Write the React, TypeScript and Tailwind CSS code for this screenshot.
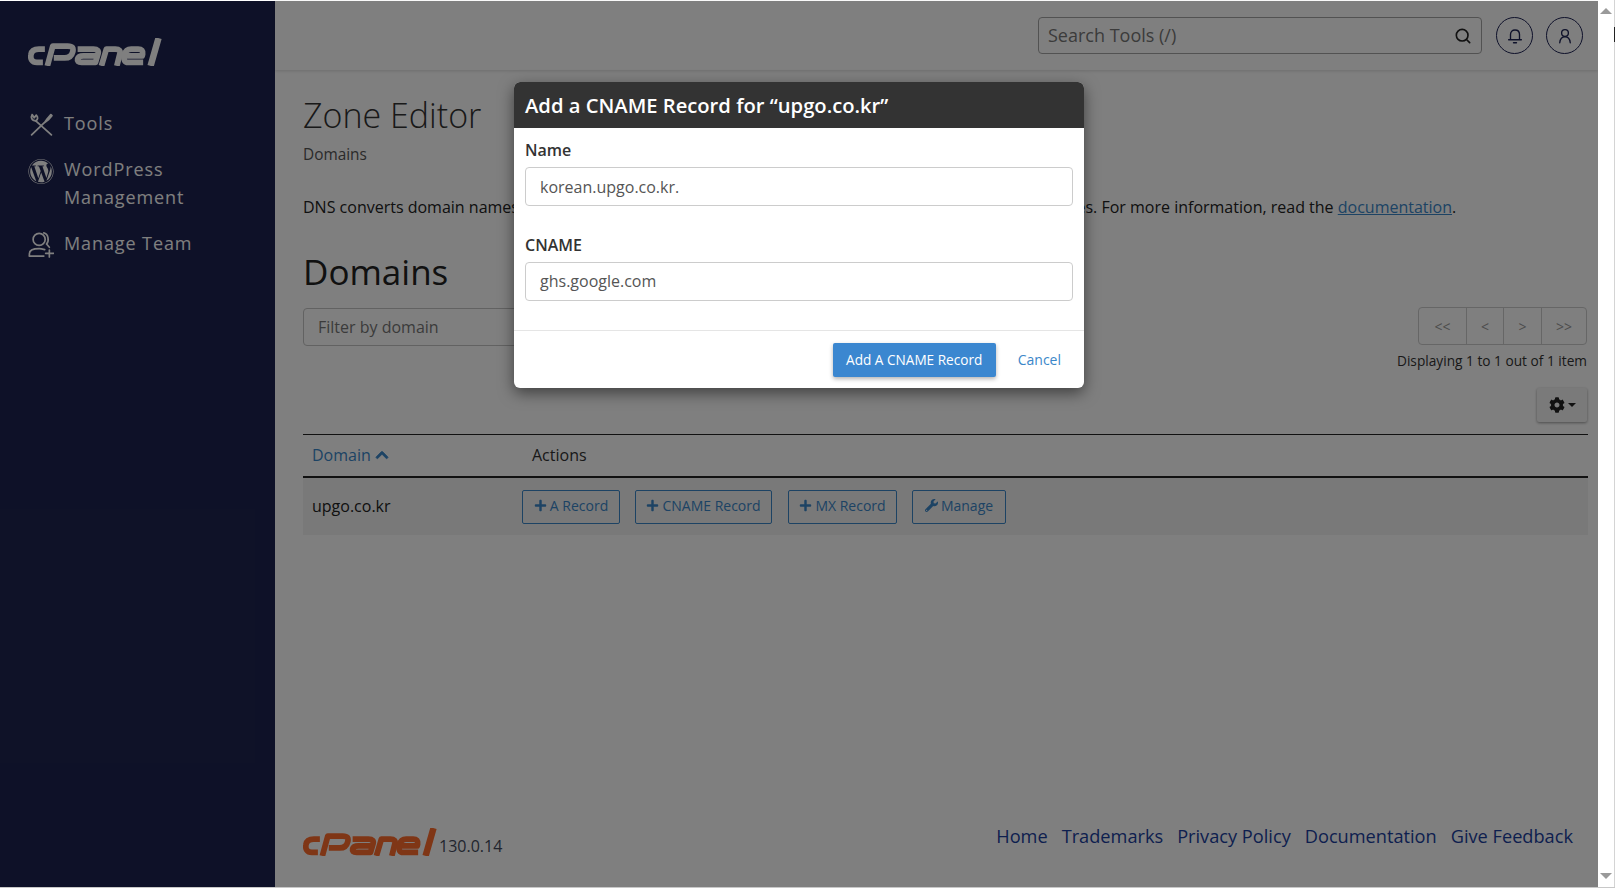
import { FaWordpress, FaWrench, FaPlus, FaChevronUp, FaCog } from 'react-icons/fa'

function CpanelLogo({ className }: { className: string }) {
  return (
    <svg viewBox="0 0 135 28" className={className} fill="none" stroke="currentColor" strokeWidth="5.8" strokeLinejoin="round">
      <path d="M17 11 H11 C6 11 3.5 13 3 16.5 C2.2 21 4 24.5 9 24.5 H15" />
      <path d="M19.5 28 L25 8 H40 C45 8 46 10 45 14 C44 18 42 20 37 20 H26" />
      <path d="M50 11 H66 C70 11 71.5 13 70.5 16 L68 24.5 H54 C50.5 24.5 49.5 23 50 21 C50.5 19 52 18 56 18 H69" />
      <path d="M74 28 L79 11 H88 C92 11 93.5 13 92.5 16 L89.5 28" />
      <path d="M99 18 H115 L115.5 16 C116 13 114.5 11 111 11 H104 C100 11 98 13 97 17 C96 22 97.5 24.5 101 24.5 H116" />
      <path d="M131.5 0 L123.5 28" strokeWidth="6.5" />
    </svg>
  )
}

function ToolsIcon() {
  return (
    <svg viewBox="0 0 24 24" className="h-[25px] w-[25px]" fill="none" stroke="currentColor" strokeWidth="1.7" strokeLinecap="round" strokeLinejoin="round">
      <path d="M2.5 22 L14.5 10.5" />
      <path d="M15 10 L17.5 6.5 L21 2.5 L22 3.5 L18.5 7.5 L15 10 Z" />
      <path d="M6.5 8.5 L21.5 22" />
      <path d="M3 2.5 C1.5 5 2.5 8.5 6.5 8.5 C8.5 7.5 9 5 7 3 L5 5.5 Z" />
    </svg>
  )
}

function TeamIcon() {
  return (
    <svg viewBox="0 0 28 28" className="h-[27px] w-[27px]" fill="none" stroke="currentColor" strokeWidth="1.8" strokeLinecap="round">
      <circle cx="12" cy="8.5" r="6.5" />
      <path d="M17 1.5 C22 2.5 23 10 20 13.5 L23 17" />
      <path d="M1.5 26 V24 C1.5 20.5 6 18.5 12 18.5 C14 18.5 16 19 18 19.5" />
      <path d="M1.5 26.5 H17" />
      <path d="M23 20 V27.5 M19 23.5 H27.5" />
    </svg>
  )
}

const navItem = 'flex gap-[10px] text-[18px] leading-7 tracking-[0.05em] text-[#ffffff]'

function Sidebar() {
  return (
    <aside className="flex w-[275px] shrink-0 flex-col bg-[#1d2350] pl-7 text-white">
      <div className="pt-[37px] pb-[43px]">
        <CpanelLogo className="h-[28px] w-[134px]" />
      </div>
      <nav className="flex flex-col gap-[18px]">
        <a className={navItem}>
          <span className="flex w-[26px] justify-center pt-[3px]"><ToolsIcon /></span>
          Tools
        </a>
        <a className={navItem}>
          <span className="flex w-[26px] justify-center pt-[3px]"><FaWordpress className="h-[27px] w-[27px]" /></span>
          <span>WordPress<br />Management</span>
        </a>
        <a className={navItem}>
          <span className="flex w-[26px] justify-center pt-[2px]"><TeamIcon /></span>
          Manage Team
        </a>
      </nav>
    </aside>
  )
}

function TopBar() {
  return (
    <header className="flex h-[69px] shrink-0 items-start justify-end gap-[14px] bg-white pt-[16px] pr-[15px] shadow-[0_1px_3px_rgba(0,0,0,0.15)]">
      <div className="flex h-[37px] w-[444px] items-center justify-between rounded-[4px] border border-[#a5a5a5] pr-[8px] pl-[9px]">
        <span className="text-[18px] text-[#777777]">Search Tools (/)</span>
        <svg viewBox="0 0 24 24" className="h-5 w-5 text-[#222222]" fill="none" stroke="currentColor" strokeWidth="2" strokeLinecap="round">
          <circle cx="11" cy="11" r="7" />
          <path d="M16.5 16.5 L20 20" />
        </svg>
      </div>
      <div className="flex gap-[13px]">
        <button className="flex h-[37px] w-[37px] items-center justify-center rounded-full border border-[#1c2254] text-[#1c2254]">
          <svg viewBox="0 0 24 24" className="h-[18px] w-[18px]" fill="none" stroke="currentColor" strokeWidth="1.8" strokeLinecap="round" strokeLinejoin="round">
            <path d="M6 17 V10 C6 6 8.5 4 12 4 C15.5 4 18 6 18 10 V17 M3.5 17 H20.5" />
            <path d="M10 21 H14" />
          </svg>
        </button>
        <button className="flex h-[37px] w-[37px] items-center justify-center rounded-full border border-[#1c2254] text-[#1c2254]">
          <svg viewBox="0 0 24 24" className="h-[18px] w-[18px]" fill="none" stroke="currentColor" strokeWidth="1.8" strokeLinecap="round" strokeLinejoin="round">
            <circle cx="12" cy="8" r="4.5" />
            <path d="M5 21 C5.5 16 8 13 12 13 C16 13 18.5 16 19 21" />
          </svg>
        </button>
      </div>
    </header>
  )
}

function ActionButton({ icon, label, className }: { icon: React.ReactNode; label: string; className: string }) {
  return (
    <button className={`flex h-[34px] items-center justify-center gap-[3px] rounded-[2px] border border-[#3b87c9] pb-[2px] text-[14px] text-[#3b87c9] ${className}`}>
      {icon}
      {label}
    </button>
  )
}

function Main() {
  return (
    <main className="flex min-w-0 flex-1 flex-col bg-white">
      <TopBar />
      <div className="flex-1 px-[28px] pt-[20px] pr-[11px]">
        <h1 className="text-[34px] leading-[50px] font-light text-[#333333]">Zone Editor</h1>
        <p className="mt-[5px] text-[15.4px] leading-5 text-[#555555]">Domains</p>
        <p className="mt-[30px] text-[16px] leading-6 whitespace-nowrap text-[#222222]">
          DNS converts domain names into computer-readable IP addresses. Use this feature to manage DNS zones. For more information, read the <a className="text-[#3b87c9] underline">documentation</a>.
        </p>
        <h2 className="mt-[30px] text-[35px] leading-[46px] font-medium text-[#222222]">Domains</h2>

        <div className="mt-[13px] flex items-start justify-between">
          <div className="flex h-[38px] w-[430px] items-center rounded-[4px] border border-[#c4c4c4] pl-[14px] text-[16px] text-[#777777]">Filter by domain</div>
          <div className="flex flex-col items-end">
            <div className="flex h-[38px] w-[169px] -translate-y-px rounded-[4px] border border-[#cccccc] text-[14px] text-[#999999]">
              <span className="flex w-[47px] items-center justify-center">&lt;&lt;</span>
              <span className="flex w-[37px] items-center justify-center border-l border-[#cccccc]">&lt;</span>
              <span className="flex w-[38px] items-center justify-center border-l border-[#cccccc]">&gt;</span>
              <span className="flex flex-1 items-center justify-center border-l border-[#cccccc]">&gt;&gt;</span>
            </div>
            <p className="mt-[5px] text-[13.7px] leading-5 text-[#333333]">Displaying 1 to 1 out of 1 item</p>
            <button className="mt-[17px] flex h-[34px] w-[50px] items-center justify-center gap-[3px] rounded-[2px] bg-[#f5f5f5] text-[#222222] shadow-[0_1px_3px_rgba(0,0,0,0.4)]">
              <FaCog className="h-[16px] w-[16px]" />
              <span className="h-0 w-0 border-x-[4px] border-t-[4px] border-x-transparent border-t-[#222222]" />
            </button>
          </div>
        </div>

        <div className="mt-[12px] -mr-px">
          <div className="flex h-[44px] items-center border-y border-y-[#222222] border-b-2 pb-[2px] text-[16px]">
            <span className="flex w-[229px] items-center gap-[4px] pl-[9px] text-[#3b87c9]">
              Domain <FaChevronUp className="h-[14px] w-[14px] stroke-current stroke-[30]" />
            </span>
            <span className="text-[#333333]">Actions</span>
          </div>
          <div className="flex h-[57px] items-center bg-[#f2f2f2] pb-[2px]">
            <span className="w-[219px] pl-[9px] text-[16px] text-[#222222]">upgo.co.kr</span>
            <div className="flex translate-y-px gap-[15px]">
              <ActionButton className="w-[98px]" icon={<FaPlus className="h-[13px] w-[13px]" />} label="A Record" />
              <ActionButton className="w-[137px]" icon={<FaPlus className="h-[13px] w-[13px]" />} label="CNAME Record" />
              <ActionButton className="ml-[1px] w-[109px]" icon={<FaPlus className="h-[13px] w-[13px]" />} label="MX Record" />
              <ActionButton className="w-[94px]" icon={<FaWrench className="h-[13px] w-[13px]" />} label="Manage" />
            </div>
          </div>
        </div>
      </div>

      <footer className="flex h-[85px] shrink-0 items-start justify-between pr-[25px] pl-[28px]">
        <div className="flex items-end gap-[2px] pt-[26px]">
          <CpanelLogo className="h-[28px] w-[134px] text-[#ff6c2c]" />
          <span className="text-[16px] leading-5 text-[#444b5c]">130.0.14</span>
        </div>
        <div className="flex gap-[14px] pt-[21px] text-[18.2px] text-[#1b3f9e]">
          <a>Home</a>
          <a>Trademarks</a>
          <a>Privacy Policy</a>
          <a>Documentation</a>
          <a>Give Feedback</a>
        </div>
      </footer>
    </main>
  )
}

function CnameModal() {
  return (
    <div className="absolute top-[81px] left-[514px] w-[570px] overflow-hidden rounded-[6px] bg-white shadow-[0_5px_15px_rgba(0,0,0,0.5)]">
      <div className="flex h-[46px] items-center bg-[#333333] px-[11px] text-[20.2px] font-semibold text-white">
        Add a CNAME Record for “upgo.co.kr”
      </div>
      <div className="px-[11px] pt-[10px]">
        <label className="block text-[16px] leading-6 font-semibold text-[#333333]">Name</label>
        <div className="mt-[5px] flex h-[39px] items-center rounded-[4px] border border-[#cccccc] pl-[14px] text-[16px] text-[#555555]">korean.upgo.co.kr.</div>
        <label className="mt-[27px] block text-[16px] leading-6 font-semibold text-[#333333]">CNAME</label>
        <div className="mt-[5px] flex h-[39px] items-center rounded-[4px] border border-[#cccccc] pb-[1px] pl-[14px] text-[16px] text-[#555555]">ghs.google.com</div>
      </div>
      <div className="mt-[29px] flex h-[58px] items-center justify-end gap-[22px] border-t border-[#e5e5e5] pr-[23px]">
        <button className="flex h-[34px] w-[163px] items-center justify-center rounded-[2px] bg-[#3b87d0] pt-px text-[13.6px] font-medium text-white shadow-[0_2px_4px_rgba(0,0,0,0.3)]">Add A CNAME Record</button>
        <a className="text-[14px] text-[#3b87c9]">Cancel</a>
      </div>
    </div>
  )
}

export default function App() {
  return (
    <div className="flex h-[888px] w-[1615px] overflow-hidden border-b border-[#c8c8c8] bg-white font-['Open_Sans',sans-serif]">
      <div className="relative mt-px flex w-[1598px]">
        <Sidebar />
        <Main />
        {/* Modal backdrop */}
        <div className="absolute inset-0 bg-black/50" />
        <CnameModal />
      </div>
      {/* Window scrollbar */}
      <div className="relative flex w-[17px] flex-col items-center justify-between border-r border-[#d4d4d4] bg-white py-[8px]">
        <span className="h-0 w-0 border-x-[6px] border-b-[6px] border-x-transparent border-b-[#9a9a9a]" />
        <span className="h-0 w-0 border-x-[6px] border-t-[6px] border-x-transparent border-t-[#9a9a9a]" />
        <span className="absolute top-[27px] -right-px h-[15px] w-px bg-[#222222]" />
      </div>
    </div>
  )
}
